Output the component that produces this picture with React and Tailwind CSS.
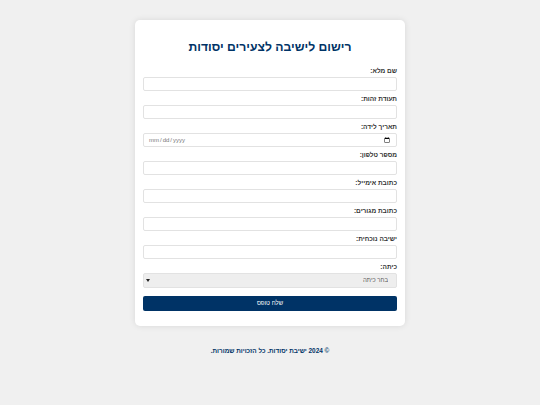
import React from 'react';

const fields = [
    { label: 'שם מלא:', type: 'text' },
    { label: 'תעודת זהות:', type: 'text' },
    { label: 'תאריך לידה:', type: 'date' },
    { label: 'מספר טלפון:', type: 'tel' },
    { label: 'כתובת אימייל:', type: 'email' },
    { label: 'כתובת מגורים:', type: 'text' },
    { label: 'ישיבה נוכחית:', type: 'text' },
];

const Field = ({ label, type }) => (
    <div className="mb-[4px]">
        <label className="block text-[6.5px] leading-[8px] font-bold text-[#333] mb-[2px]">{label}</label>
        <input
            type={type}
            dir={type === 'date' ? 'ltr' : 'rtl'}
            className="block w-full h-[14px] px-[4px] text-[6px] text-[#777] bg-white border border-[#e2e2e2] rounded-[2px] outline-none"
        />
    </div>
);

export default function App() {
    return (
        <div dir="rtl" className="min-h-[405px] bg-[#f0f0f0] pt-[20px] font-['Liberation_Sans',Arial,sans-serif]">
            <div className="w-[270px] mx-auto bg-white rounded-[5px] shadow-[0_0_6px_rgba(0,0,0,0.1)] px-[8px] pt-[19px] pb-[15px]">
                <h1 className="text-[12.2px] leading-[16px] font-bold text-[#003366] text-center mb-[12px]">רישום לישיבה לצעירים יסודות</h1>
                <form>
                    {fields.map((f) => (
                        <Field key={f.label} {...f} />
                    ))}
                    <div className="mb-[8px]">
                        <label className="block text-[6.5px] leading-[8px] font-bold text-[#333] mb-[2px]">כיתה:</label>
                        <div className="relative">
                            <select className="block w-full h-[15px] px-[8px] text-[6px] text-[#555] bg-[#eee] border border-[#e2e2e2] rounded-[2px] outline-none appearance-none">
                                <option>בחר כיתה</option>
                            </select>
                            <svg className="absolute left-[3px] top-[5.5px] w-[4px] h-[3px] pointer-events-none" viewBox="0 0 4 3">
                                <path d="M0 0 L4 0 L2 3 Z" fill="#222" />
                            </svg>
                        </div>
                    </div>
                    <button
                        type="button"
                        className="block w-full h-[15px] text-[6px] text-white bg-[#003366] rounded-[2px]"
                    >
                        שלח טופס
                    </button>
                </form>
            </div>
            <footer className="text-center text-[6.4px] leading-[8px] font-bold text-[#003366] mt-[21px]">
                © 2024 ישיבת יסודות. כל הזכויות שמורות.
            </footer>
        </div>
    );
}
